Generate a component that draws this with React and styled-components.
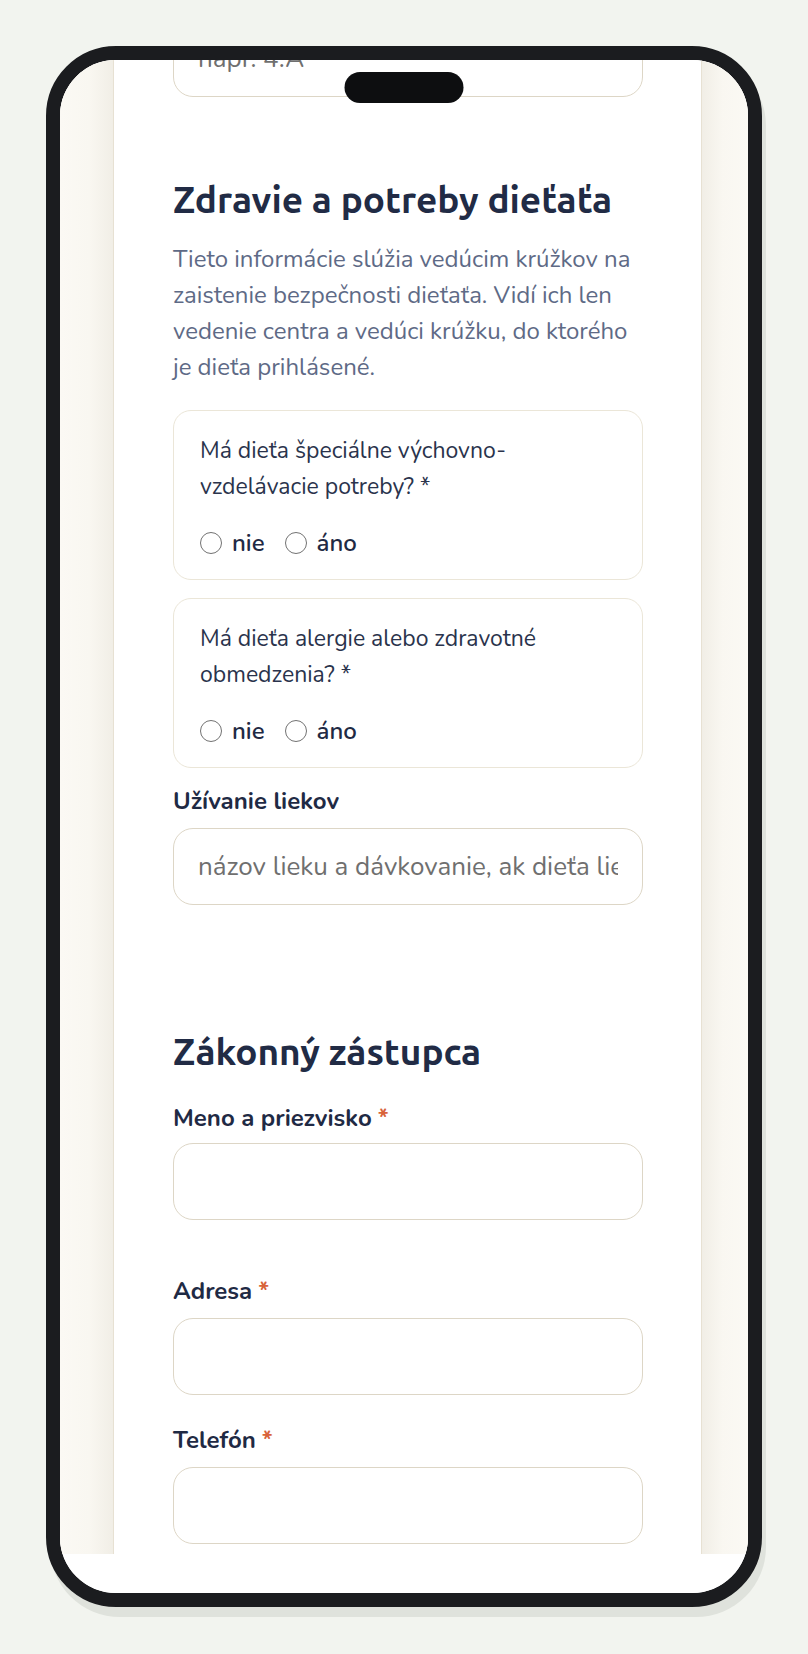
import React from "react";
import styled, { createGlobalStyle } from "styled-components";

const GlobalStyle = createGlobalStyle`
  html, body {
    margin: 0;
    padding: 0;
    background: #f2f4ef;
  }
  body {
    font-family: "Nunito", "Lato", "Noto Sans", sans-serif;
  }
  * {
    box-sizing: border-box;
  }
`;

const Page = styled.div`
  min-height: 1654px;
  padding-top: 46px;
  display: flex;
  justify-content: center;
  align-items: flex-start;
`;

const Phone = styled.div`
  position: relative;
  width: 716px;
  height: 1561px;
  border: 14px solid #1b1c1f;
  border-radius: 70px;
  background: #fff;
  overflow: hidden;
  box-shadow: 4px 10px 0 #dfe2dc;
  display: flex;
  flex-direction: column;
`;

const Island = styled.div`
  position: absolute;
  top: 12px;
  left: 50%;
  transform: translateX(-50%);
  width: 119px;
  height: 31px;
  border-radius: 16px;
  background: #0d0e10;
  z-index: 2;
`;

const Viewport = styled.div`
  flex: 1;
  display: flex;
  overflow: hidden;
  background: #faf8f3;
`;

const Gutter = styled.div`
  flex: 0 0 ${(p) => (p.$side === "left" ? "53px" : "46px")};
  background: linear-gradient(
    ${(p) => (p.$side === "left" ? "to right" : "to left")},
    #fbf9f4 0%,
    #f9f7f1 55%,
    #f1eee6 100%
  );
`;

const Column = styled.main`
  flex: 0 0 589px;
  background: #fff;
  border-left: 1px solid #e7e1d3;
  border-right: 1px solid #e7e1d3;
  padding: 0 58px 0 59px;
`;

const Scroll = styled.div`
  margin-top: -40px;
  display: flex;
  flex-direction: column;
`;

const SafeArea = styled.div`
  flex: 0 0 39px;
  background: #fff;
`;

const SectionTitle = styled.h2`
  margin: ${(p) => p.$top}px 0 0;
  font-family: "Ubuntu", "Lato", sans-serif;
  font-weight: 700;
  font-size: 37px;
  line-height: 40px;
  color: #212b45;
`;

const Intro = styled.p`
  margin: 21px 0 0;
  font-size: 24px;
  line-height: 36px;
  color: #5e6a86;
`;

const QuestionCard = styled.div`
  margin-top: ${(p) => p.$top}px;
  padding: 22px 26px 21px;
  border: 1px solid #ebe6d8;
  border-radius: 18px;
`;

const Question = styled.div`
  font-size: 23px;
  line-height: 36px;
  color: #2a334c;
`;

const RadioRow = styled.div`
  margin-top: 23px;
  display: flex;
  align-items: center;
  gap: 20px;
  height: 30px;
`;

const RadioOption = styled.label`
  display: inline-flex;
  align-items: center;
  gap: 10px;
  font-size: 24px;
  line-height: 30px;
  font-weight: 600;
  color: #1f2a44;
`;

const Radio = styled.input.attrs({ type: "radio" })`
  appearance: none;
  flex: 0 0 auto;
  margin: 0;
  width: 22px;
  height: 22px;
  border: 1.5px solid #727272;
  border-radius: 50%;
  background: #fff;
`;

const Field = styled.div`
  margin-top: ${(p) => p.$top}px;
  display: flex;
  flex-direction: column;
  gap: ${(p) => p.$gap ?? 13}px;
`;

const Label = styled.label`
  display: block;
  font-size: 24px;
  font-weight: 700;
  line-height: 28px;
  color: #1f2a44;
`;

const Required = styled.span`
  color: #d8633a;
  margin-left: 6px;
`;

const TextInput = styled.input`
  display: block;
  width: 100%;
  height: 77px;
  padding: 0 24px;
  border: 1.5px solid #ddd6c6;
  border-radius: 20px;
  background: #fff;
  font-family: inherit;
  font-size: 26px;
  color: #1f2a44;
  outline: none;

  &::placeholder {
    color: #6f6f6f;
    opacity: 1;
  }
`;

function YesNo({ name, children, top }) {
  return (
    <QuestionCard $top={top} role="radiogroup">
      <Question>{children} *</Question>
      <RadioRow>
        <RadioOption>
          <Radio name={name} value="nie" />
          nie
        </RadioOption>
        <RadioOption>
          <Radio name={name} value="ano" />
          áno
        </RadioOption>
      </RadioRow>
    </QuestionCard>
  );
}

export default function App() {
  return (
    <>
      <GlobalStyle />
      <Page>
        <Phone>
          <Island />
          <Viewport>
            <Gutter $side="left" />
            <Column>
              <Scroll>
                <TextInput placeholder="napr. 4.A" />

                <SectionTitle $top={83}>Zdravie a potreby dieťaťa</SectionTitle>
                <Intro>
                  Tieto informácie slúžia vedúcim krúžkov na zaistenie bezpečnosti
                  dieťaťa. Vidí ich len vedenie centra a vedúci krúžku, do ktorého
                  je dieťa prihlásené.
                </Intro>

                <YesNo name="svvp" top={25}>
                  Má dieťa špeciálne výchovno-vzdelávacie potreby?
                </YesNo>
                <YesNo name="alergie" top={18}>
                  Má dieťa alergie alebo zdravotné obmedzenia?
                </YesNo>

                <Field $top={19}>
                  <Label>Užívanie liekov</Label>
                  <TextInput placeholder="názov lieku a dávkovanie, ak dieťa lieky užíva" />
                </Field>

                <SectionTitle $top={127}>Zákonný zástupca</SectionTitle>

                <Field $top={32} $gap={11}>
                  <Label>
                    Meno a priezvisko<Required>*</Required>
                  </Label>
                  <TextInput />
                </Field>
                <Field $top={57}>
                  <Label>
                    Adresa<Required>*</Required>
                  </Label>
                  <TextInput />
                </Field>
                <Field $top={31}>
                  <Label>
                    Telefón<Required>*</Required>
                  </Label>
                  <TextInput type="tel" />
                </Field>
              </Scroll>
            </Column>
            <Gutter $side="right" />
          </Viewport>
          <SafeArea />
        </Phone>
      </Page>
    </>
  );
}
